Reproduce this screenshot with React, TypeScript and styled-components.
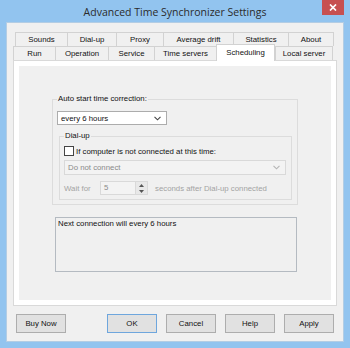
import React from 'react';
import styled, { createGlobalStyle } from 'styled-components';

const GlobalStyle = createGlobalStyle`
  html, body {
    margin: 0;
    padding: 0;
  }
  body {
    width: 350px;
    height: 348px;
    overflow: hidden;
    background: #92c4ef;
    font-family: "Liberation Sans", Arial, sans-serif;
  }
`;

const upperTabs = [
  { label: 'Sounds', w: 52 },
  { label: 'Dial-up', w: 49 },
  { label: 'Proxy', w: 47 },
  { label: 'Average drift', w: 70 },
  { label: 'Statistics', w: 55 },
  { label: 'About', w: 46 },
];

const lowerTabs = [
  { label: 'Run', w: 42 },
  { label: 'Operation', w: 53 },
  { label: 'Service', w: 46 },
  { label: 'Time servers', w: 62 },
  { label: 'Scheduling', w: 59, active: true },
  { label: 'Local server', w: 58 },
];

const Chevron: React.FC<{ color: string }> = ({ color }) => (
  <svg width="7" height="5" viewBox="0 0 7 5">
    <polyline points="0.5,0.8 3.5,3.8 6.5,0.8" fill="none" stroke={color} strokeWidth="1.1" />
  </svg>
);

export default function App() {
  return (
    <>
      <GlobalStyle />
      <Window>
        <TitleBar>
          <Title>Advanced Time Synchronizer Settings</Title>
          <CloseButton>
            <svg width="8" height="7" viewBox="0 0 8 7">
              <path d="M1 0.5 L7 6.5 M7 0.5 L1 6.5" stroke="#fff" strokeWidth="1.7" />
            </svg>
          </CloseButton>
        </TitleBar>
        <Client>
          <TabControl>
            <TabRow $ml={2}>
              {upperTabs.map((t) => (
                <Tab key={t.label} $w={t.w}>
                  {t.label}
                </Tab>
              ))}
            </TabRow>
            <TabRow $ml={0}>
              {lowerTabs.map((t) => (
                <Tab key={t.label} $w={t.w} $active={t.active}>
                  {t.label}
                </Tab>
              ))}
            </TabRow>
            <Panel>
              <Page>
                <OuterGroup>
                  <Legend>Auto start time correction:</Legend>
                  <Combo>
                    <span>every 6 hours</span>
                    <Chevron color="#444" />
                  </Combo>
                  <DialGroup>
                    <Legend>Dial-up</Legend>
                    <CheckRow>
                      <CheckBox />
                      <span>If computer is not connected at this time:</span>
                    </CheckRow>
                    <Combo $disabled>
                      <span>Do not connect</span>
                      <Chevron color="#b5b5b5" />
                    </Combo>
                    <WaitRow>
                      <WaitLabel>Wait for</WaitLabel>
                      <SpinBox>
                        <SpinValue>5</SpinValue>
                        <SpinButtons>
                          <svg width="5" height="3" viewBox="0 0 5 3">
                            <polygon points="2.5,0 5,3 0,3" fill="#555" />
                          </svg>
                          <svg width="5" height="3" viewBox="0 0 5 3">
                            <polygon points="0,0 5,0 2.5,3" fill="#555" />
                          </svg>
                        </SpinButtons>
                      </SpinBox>
                      <DimText>seconds after Dial-up connected</DimText>
                    </WaitRow>
                  </DialGroup>
                </OuterGroup>
                <StatusBox>Next connection will every 6 hours</StatusBox>
              </Page>
            </Panel>
          </TabControl>
          <ButtonBar>
            <DialogButton>Buy Now</DialogButton>
            <ButtonGroup>
              <DialogButton $default>OK</DialogButton>
              <DialogButton>Cancel</DialogButton>
              <DialogButton>Help</DialogButton>
              <DialogButton>Apply</DialogButton>
            </ButtonGroup>
          </ButtonBar>
        </Client>
      </Window>
    </>
  );
}

const Window = styled.div`
  width: 350px;
  height: 348px;
  box-sizing: border-box;
  padding: 0 6px 6px;
  display: flex;
  flex-direction: column;
  background: #92c4ef;
`;

const TitleBar = styled.div`
  height: 22px;
  display: grid;
  grid-template-columns: 1fr auto 1fr;
  align-items: center;
`;

const Title = styled.div`
  grid-column: 2;
  font-family: "Open Sans", "Noto Sans", sans-serif;
  font-size: 10.5px;
  color: #2b2b2b;
  margin-top: 1px;
`;

const CloseButton = styled.div`
  grid-column: 3;
  justify-self: end;
  align-self: start;
  width: 22px;
  height: 15px;
  background: #c75050;
  display: flex;
  align-items: center;
  justify-content: center;
`;

const Client = styled.div`
  flex: 1;
  box-sizing: border-box;
  background: #f0f0f0;
  border: 1px solid #b3cde4;
  padding: 9px 6px 8px;
  display: flex;
  flex-direction: column;
  font-size: 7.8px;
  color: #111;
`;

const TabControl = styled.div`
  flex: 1;
  display: flex;
  flex-direction: column;
`;

const TabRow = styled.div<{ $ml: number }>`
  height: 14px;
  display: flex;
  align-items: flex-end;
  margin-left: ${(p) => p.$ml}px;
`;

const Tab = styled.div<{ $w: number; $active?: boolean }>`
  width: ${(p) => p.$w}px;
  height: ${(p) => (p.$active ? 17 : 14)}px;
  margin-bottom: ${(p) => (p.$active ? -1 : 0)}px;
  box-sizing: border-box;
  border: 1px solid #d2d2d2;
  border-bottom: none;
  border-right-width: ${(p) => (p.$active ? 1 : 0)}px;
  background: ${(p) => (p.$active ? '#fff' : '#f0f0f0')};
  position: ${(p) => (p.$active ? 'relative' : 'static')};
  z-index: ${(p) => (p.$active ? 2 : 'auto')};
  display: flex;
  align-items: center;
  justify-content: center;
  padding-bottom: ${(p) => (p.$active ? 2 : 0)}px;
  white-space: nowrap;

  &:last-child {
    border-right-width: 1px;
  }
`;

const Panel = styled.div`
  flex: 1;
  box-sizing: border-box;
  border: 1px solid #d9d9d9;
  background: #fff;
  padding: 5px;
  display: flex;
`;

const Page = styled.div`
  flex: 1;
  background: #f0f0f0;
  display: flex;
  flex-direction: column;
  padding-left: 33px;
`;

const Legend = styled.legend`
  padding: 0 1px;
  line-height: 10px;
`;

const OuterGroup = styled.fieldset`
  margin: 28px 0 0;
  width: 246px;
  min-width: 0;
  box-sizing: border-box;
  border: 1px solid #dcdcdc;
  padding: 7px 5px 4px 4px;
`;

const DialGroup = styled.fieldset`
  margin: 6px 0 0 2px;
  width: 233px;
  min-width: 0;
  box-sizing: border-box;
  border: 1px solid #dcdcdc;
  padding: 4px 5px 4px 4px;
`;

const Combo = styled.div<{ $disabled?: boolean }>`
  width: ${(p) => (p.$disabled ? 222 : 110)}px;
  height: ${(p) => (p.$disabled ? 15 : 14)}px;
  box-sizing: border-box;
  border: 1px solid ${(p) => (p.$disabled ? '#d9d9d9' : '#acacac')};
  background: ${(p) => (p.$disabled ? '#f3f3f3' : '#fff')};
  color: ${(p) => (p.$disabled ? '#8a8a8a' : '#111')};
  display: flex;
  align-items: center;
  justify-content: space-between;
  padding: 0 5px 0 3px;
  margin-top: ${(p) => (p.$disabled ? 3 : 0)}px;
`;

const CheckRow = styled.div`
  height: 12px;
  display: flex;
  align-items: center;
  gap: 2px;
`;

const CheckBox = styled.div`
  width: 10px;
  height: 10px;
  box-sizing: border-box;
  border: 1px solid #444;
  background: #fff;
`;

const WaitRow = styled.div`
  height: 14px;
  margin-top: 6px;
  display: flex;
  align-items: center;
`;

const DimText = styled.span`
  color: #a3a3a3;
`;

const WaitLabel = styled(DimText)`
  width: 36px;
`;

const SpinBox = styled.div`
  width: 48px;
  height: 14px;
  box-sizing: border-box;
  border: 1px solid #d9d9d9;
  background: #f3f3f3;
  display: flex;
  justify-content: space-between;
  margin-right: 7px;
`;

const SpinValue = styled.span`
  color: #8a8a8a;
  padding-left: 3px;
  line-height: 12px;
`;

const SpinButtons = styled.div`
  width: 12px;
  box-sizing: border-box;
  border-left: 1px solid #d9d9d9;
  background: #e8e8e8;
  display: flex;
  flex-direction: column;
  align-items: center;
  justify-content: space-around;
`;

const StatusBox = styled.div`
  margin: 12px 0 0 3px;
  width: 242px;
  height: 55px;
  box-sizing: border-box;
  border: 1px solid #b4bac1;
  padding: 1px 2px;
  line-height: 10px;
`;

const ButtonBar = styled.div`
  margin-top: 8px;
  height: 19px;
  display: flex;
  justify-content: space-between;
  padding: 0 3px;
`;

const ButtonGroup = styled.div`
  display: flex;
  gap: 9px;
`;

const DialogButton = styled.button<{ $default?: boolean }>`
  width: 50px;
  height: 19px;
  box-sizing: border-box;
  margin: 0;
  padding: 0;
  border: 1px solid ${(p) => (p.$default ? '#6ea6dd' : '#adadad')};
  background: #e1e1e1;
  font-family: "Liberation Sans", Arial, sans-serif;
  font-size: 7.8px;
  color: #111;
`;
